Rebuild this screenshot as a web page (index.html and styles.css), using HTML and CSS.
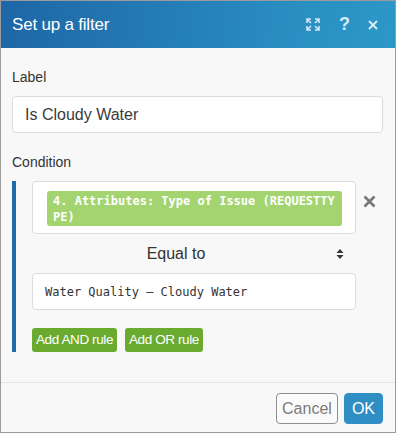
FILE: index.html
```html
<!DOCTYPE html>
<html>
<head>
<meta charset="utf-8">
<link rel="stylesheet" href="styles.css">
</head>
<body>
<div class="dialog">
  <div class="header">
    <div class="title">Set up a filter</div>
    <div class="tools">
      <svg class="icon" width="14" height="13" viewBox="0 0 14 13" fill="none" stroke="#cfe6f3" stroke-width="1.6">
        <path d="M1 5V1h4M1 1l4 4M9 1h4v4M13 1L9 5M1 8v4h4M1 12l4-4M9 12h4V8M13 12L9 8"/>
      </svg>
      <span class="help">?</span>
      <svg class="icon" width="10" height="10" viewBox="0 0 10 10" stroke="#ddeef7" stroke-width="1.8">
        <path d="M1 1l8 8M9 1l-8 8"/>
      </svg>
    </div>
  </div>
  <div class="content">
    <div class="field-label">Label</div>
    <div class="text-input">Is Cloudy Water</div>
    <div class="field-label cond-label">Condition</div>
    <div class="condition">
      <div class="rule">
        <div class="rule-main">
          <div class="box operand">
            <span class="pill">4. Attributes: Type of Issue (REQUESTTYPE)</span>
          </div>
          <div class="remove">
            <svg width="13" height="13" viewBox="0 0 13 13" stroke="#777" stroke-width="2.6" stroke-linecap="butt">
              <path d="M1.5 1.5l10 10M11.5 1.5l-10 10"/>
            </svg>
          </div>
        </div>
        <div class="operator">
          <span class="op-text">Equal to</span>
          <svg class="updown" width="8" height="12" viewBox="0 0 8 12" fill="#333">
            <path d="M4 1L7.5 5H0.5z M4 11L0.5 7H7.5z"/>
          </svg>
        </div>
        <div class="box value">Water Quality – Cloudy Water</div>
      </div>
      <div class="rule-buttons">
        <span class="btn-green">Add AND rule</span>
        <span class="btn-green">Add OR rule</span>
      </div>
    </div>
  </div>
  <div class="footer">
    <span class="btn-cancel">Cancel</span>
    <span class="btn-ok">OK</span>
  </div>
</div>
</body>
</html>
```
FILE: styles.css
```css
html, body {
  margin: 0;
  padding: 0;
}
body {
  font-family: "Liberation Sans", Arial, sans-serif;
  color: #333;
}
.dialog {
  width: 396px;
  height: 433px;
  box-sizing: border-box;
  border: 1px solid #9b9b9b;
  background: #f8f8f8;
  display: flex;
  flex-direction: column;
}
.header {
  height: 47px;
  flex: none;
  background: linear-gradient(100deg, #1e66a7 0%, #2a8fc2 75%, #2c98c7 100%);
  display: flex;
  align-items: center;
  justify-content: space-between;
  padding: 0 17px 0 11px;
}
.title {
  color: #fff;
  font-size: 17px;
  letter-spacing: -0.2px;
}
.tools {
  display: flex;
  align-items: center;
  gap: 19px;
}
.help {
  color: #d6ebf6;
  font-size: 18px;
  font-weight: bold;
  width: 10px;
  text-align: center;
}
.content {
  flex: 1;
  padding: 19px 12px 0 11px;
  border-bottom: 1px solid #e4e4e4;
}
.field-label {
  font-size: 14px;
  line-height: 20px;
  color: #333;
}
.text-input {
  margin-top: 9px;
  height: 37px;
  box-sizing: border-box;
  background: #fff;
  border: 1px solid #dcdcdc;
  border-radius: 4px;
  padding: 0 12px;
  font-size: 16px;
  line-height: 35px;
  color: #3a3a3a;
}
.cond-label {
  margin-top: 19px;
}
.condition {
  margin-top: 9px;
  border-left: 4px solid #1e6aaa;
  padding-left: 16px;
}
.rule-main {
  display: flex;
  align-items: flex-start;
}
.box {
  width: 324px;
  box-sizing: border-box;
  background: #fff;
  border: 1px solid #dcdcdc;
  border-radius: 4px;
}
.operand {
  padding: 9px 13px 7px 14px;
}
.pill {
  display: block;
  background: #a3d470;
  color: #fff;
  border-radius: 3px;
  padding: 2px 6px 1px 6px;
  font-family: "DejaVu Sans Mono", "Liberation Mono", monospace;
  font-size: 12px;
  font-weight: bold;
  line-height: 16px;
  word-break: break-all;
}
.remove {
  flex: 1;
  display: flex;
  justify-content: center;
  padding-top: 14px;
}
.operator {
  width: 324px;
  height: 39px;
  display: flex;
  align-items: center;
}
.op-text {
  flex: 1;
  text-align: center;
  font-size: 16px;
  color: #333;
  padding-right: 16px;
}
.updown {
  margin-right: 12px;
}
.value {
  height: 37px;
  padding: 0 12px;
  font-family: "DejaVu Sans Mono", "Liberation Mono", monospace;
  font-size: 12px;
  line-height: 36px;
  color: #333;
}
.rule-buttons {
  display: flex;
  gap: 8px;
  margin-top: 18px;
}
.btn-green {
  background: #6aab2f;
  color: #fff;
  font-size: 13.5px;
  letter-spacing: -0.4px;
  line-height: 24px;
  height: 24px;
  padding: 0 4px;
  border-radius: 3px;
}
.footer {
  height: 49px;
  flex: none;
  display: flex;
  justify-content: flex-end;
  align-items: center;
  gap: 6px;
  padding: 1px 12px 0 0;
  box-sizing: border-box;
}
.btn-cancel, .btn-ok {
  height: 31px;
  box-sizing: border-box;
  border-radius: 4px;
  font-size: 16px;
  line-height: 29px;
}
.btn-cancel {
  border: 1px solid #8f8f8f;
  color: #7a7a7a;
  background: #fafafa;
  padding: 0 5px;
}
.btn-ok {
  border: 1px solid #2f8fc4;
  background: #2f8fc4;
  color: #fff;
  padding: 0 7px;
}
```
